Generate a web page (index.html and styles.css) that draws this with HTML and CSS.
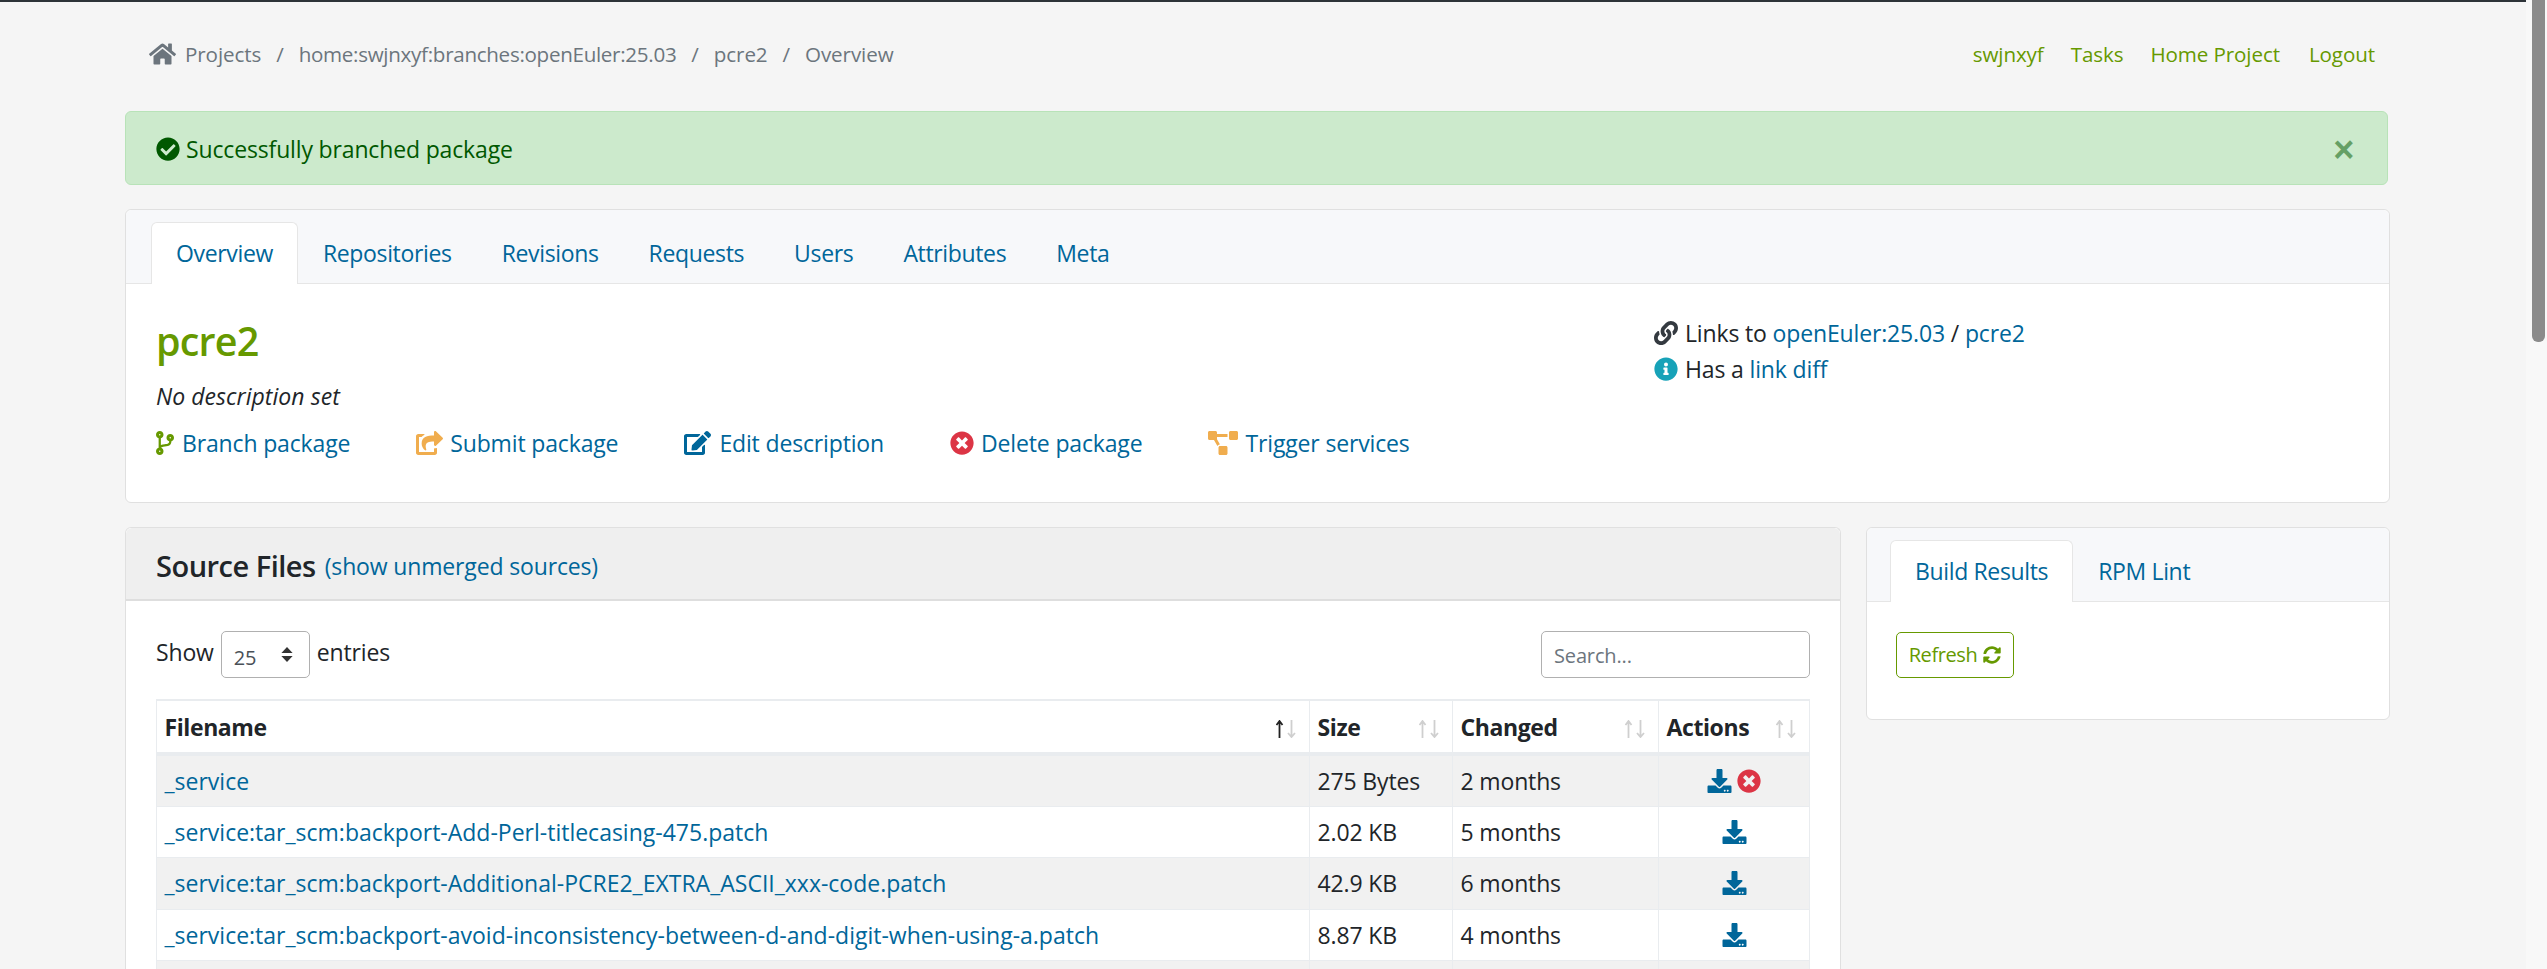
FILE: index.html
```html
<!DOCTYPE html>
<html lang="en">
<head>
<meta charset="utf-8">
<title>pcre2 - Overview</title>
<link rel="stylesheet" href="styles.css">
</head>
<body>
<svg class="defs" width="0" height="0" aria-hidden="true">
  <defs>
    <symbol id="i-home" viewBox="0 0 576 512"><path d="M280.37 148.26L96 300.11V464a16 16 0 0 0 16 16l112.06-.29a16 16 0 0 0 15.92-16V368a16 16 0 0 1 16-16h64a16 16 0 0 1 16 16v95.64a16 16 0 0 0 16 16.05L464 480a16 16 0 0 0 16-16V300L295.67 148.26a12.19 12.19 0 0 0-15.3 0zM571.6 251.47L488 182.56V44.05a12 12 0 0 0-12-12h-56a12 12 0 0 0-12 12v72.61L318.47 43a48 48 0 0 0-61 0L4.34 251.47a12 12 0 0 0-1.6 16.9l25.5 31A12 12 0 0 0 45.15 301l235.22-193.74a12.19 12.19 0 0 1 15.3 0L530.9 301a12 12 0 0 0 16.9-1.6l25.5-31a12 12 0 0 0-1.7-16.93z"/></symbol>
    <symbol id="i-check" viewBox="0 0 512 512"><path d="M504 256c0 136.967-111.033 248-248 248S8 392.967 8 256 119.033 8 256 8s248 111.033 248 248zM227.314 387.314l184-184c6.248-6.248 6.248-16.379 0-22.627l-22.627-22.627c-6.248-6.249-16.379-6.249-22.628 0L216 308.118l-70.059-70.059c-6.248-6.248-16.379-6.248-22.628 0l-22.627 22.627c-6.248 6.248-6.248 16.379 0 22.627l104 104c6.249 6.249 16.379 6.249 22.628.001z"/></symbol>
    <symbol id="i-times" viewBox="0 0 512 512"><path d="M256 8C119 8 8 119 8 256s111 248 248 248 248-111 248-248S393 8 256 8zm121.6 313.1c4.7 4.7 4.7 12.3 0 17L338 377.6c-4.7 4.7-12.3 4.7-17 0L256 312l-65.1 65.6c-4.7 4.7-12.3 4.7-17 0L134.4 338c-4.7-4.7-4.7-12.3 0-17l65.6-65-65.6-65.1c-4.7-4.7-4.7-12.3 0-17l39.6-39.6c4.7-4.7 12.3-4.7 17 0l65 65.7 65.1-65.6c4.7-4.7 12.3-4.7 17 0l39.6 39.6c4.7 4.7 4.7 12.3 0 17L312 256l65.6 65.1z"/></symbol>
    <symbol id="i-info" viewBox="0 0 512 512"><path d="M256 8C119.043 8 8 119.083 8 256c0 136.997 111.043 248 248 248s248-111.003 248-248C504 119.083 392.957 8 256 8zm0 110c23.196 0 42 18.804 42 42s-18.804 42-42 42-42-18.804-42-42 18.804-42 42-42zm56 254c0 6.627-5.373 12-12 12h-88c-6.627 0-12-5.373-12-12v-24c0-6.627 5.373-12 12-12h12v-64h-12c-6.627 0-12-5.373-12-12v-24c0-6.627 5.373-12 12-12h64c6.627 0 12 5.373 12 12v100h12c6.627 0 12 5.373 12 12v24z"/></symbol>
    <symbol id="i-link" viewBox="0 0 512 512"><path d="M326.612 185.391c59.747 59.809 58.927 155.698.36 214.59-.11.12-.24.25-.36.37l-67.2 67.2c-59.27 59.27-155.699 59.262-214.96 0-59.27-59.26-59.27-155.7 0-214.96l37.106-37.106c9.84-9.84 26.786-3.3 27.294 10.606.648 17.722 3.826 35.527 9.69 52.721 1.986 5.822.567 12.262-3.783 16.612l-13.087 13.087c-28.026 28.026-28.905 73.66-1.155 101.96 28.024 28.579 74.086 28.749 102.325.51l67.2-67.19c28.191-28.191 28.073-73.757 0-101.83-3.701-3.694-7.429-6.564-10.341-8.569a16.037 16.037 0 0 1-6.947-12.606c-.396-10.567 3.348-21.456 11.698-29.806l21.054-21.055c5.521-5.521 14.182-6.199 20.584-1.731a152.482 152.482 0 0 1 20.522 17.197zM467.547 44.449c-59.261-59.262-155.69-59.27-214.96 0l-67.2 67.2c-.12.12-.25.25-.36.37-58.566 58.892-59.387 154.781.36 214.59a152.454 152.454 0 0 0 20.521 17.196c6.402 4.468 15.064 3.789 20.584-1.731l21.054-21.055c8.35-8.35 12.094-19.239 11.698-29.806a16.037 16.037 0 0 0-6.947-12.606c-2.912-2.005-6.64-4.875-10.341-8.569-28.073-28.073-28.191-73.639 0-101.83l67.2-67.19c28.239-28.239 74.3-28.069 102.325.51 27.75 28.3 26.872 73.934-1.155 101.96l-13.087 13.087c-4.35 4.35-5.769 10.79-3.783 16.612 5.864 17.194 9.042 34.999 9.69 52.721.509 13.906 17.454 20.446 27.294 10.606l37.106-37.106c59.271-59.259 59.271-155.699.001-214.959z"/></symbol>
    <symbol id="i-branch" viewBox="0 0 384 512"><path d="M384 144c0-44.2-35.8-80-80-80s-80 35.8-80 80c0 36.4 24.3 67.1 57.5 76.8-.6 16.1-4.2 28.5-11 36.9-15.4 19.2-49.3 22.4-85.2 25.7-28.2 2.6-57.4 5.4-81.3 16.9v-144c32.5-10.2 56-40.5 56-76.3 0-44.2-35.8-80-80-80S0 35.8 0 80c0 35.8 23.5 66.1 56 76.3v199.3C23.5 365.9 0 396.2 0 432c0 44.2 35.8 80 80 80s80-35.8 80-80c0-34-21.2-63.1-51.2-74.6 3.1-5.2 7.8-9.8 14.9-13.4 16.2-8.2 40.4-10.4 66.1-12.8 42.2-3.9 90-8.4 118.2-43.4 14-17.4 21.1-39.8 21.6-67.9 31.6-10.8 54.4-40.7 54.4-75.9zM80 64c8.8 0 16 7.2 16 16s-7.2 16-16 16-16-7.2-16-16 7.2-16 16-16zm0 384c-8.8 0-16-7.2-16-16s7.2-16 16-16 16 7.2 16 16-7.2 16-16 16zm224-320c8.8 0 16 7.2 16 16s-7.2 16-16 16-16-7.2-16-16 7.2-16 16-16z"/></symbol>
    <symbol id="i-share" viewBox="0 0 576 512"><path d="M568.482 177.448L424.479 313.433C409.3 327.768 384 317.14 384 295.985v-71.963c-144.575.97-205.566 35.113-164.775 171.353 4.483 14.973-12.846 26.567-25.006 17.33C155.252 383.105 120 326.488 120 269.339c0-143.937 117.599-172.5 264-173.312V24.012c0-21.174 25.317-31.768 40.479-17.448l144.003 135.988c10.02 9.463 10.028 25.425 0 34.896zM384 379.128V448H64V128h50.916a11.99 11.99 0 0 0 8.648-3.693c14.953-15.568 32.237-27.89 51.014-37.676C186.708 80.7 183.749 64 170.84 64H48C21.49 64 0 85.49 0 112v352c0 26.51 21.49 48 48 48h352c26.51 0 48-21.49 48-48v-88.806c0-8.288-8.197-14.066-16.011-11.302a71.83 71.83 0 0 1-34.189 3.377c-7.27-1.046-13.8 4.514-13.8 11.859z"/></symbol>
    <symbol id="i-edit" viewBox="0 0 576 512"><path d="M402.6 83.2l90.2 90.2c3.8 3.8 3.8 10 0 13.8L274.4 405.6l-92.8 10.3c-12.4 1.4-22.9-9.1-21.5-21.5l10.3-92.8L388.8 83.2c3.8-3.8 10-3.8 13.8 0zm162-22.9l-48.8-48.8c-15.2-15.2-39.9-15.2-55.2 0l-35.4 35.4c-3.8 3.8-3.8 10 0 13.8l90.2 90.2c3.8 3.8 10 3.8 13.8 0l35.4-35.4c15.2-15.3 15.2-40 0-55.2zM384 346.2V448H64V128h229.8c3.2 0 6.2-1.3 8.5-3.5l40-40c7.6-7.6 2.2-20.5-8.5-20.5H48C21.5 64 0 85.5 0 112v352c0 26.5 21.5 48 48 48h352c26.5 0 48-21.5 48-48V306.2c0-10.7-12.9-16-20.5-8.5l-40 40c-2.2 2.3-3.5 5.3-3.5 8.5z"/></symbol>
    <symbol id="i-diagram" viewBox="0 0 640 512"><path d="M384 320H256c-17.67 0-32 14.33-32 32v128c0 17.67 14.33 32 32 32h128c17.67 0 32-14.33 32-32V352c0-17.67-14.33-32-32-32zM192 32c0-17.67-14.33-32-32-32H32C14.33 0 0 14.33 0 32v128c0 17.67 14.33 32 32 32h95.72l73.16 128.04C211.98 300.98 232.4 288 256 288h.28L192 175.51V128h224V64H192V32zM608 0H480c-17.67 0-32 14.33-32 32v128c0 17.67 14.33 32 32 32h128c17.67 0 32-14.33 32-32V32c0-17.67-14.33-32-32-32z"/></symbol>
    <symbol id="i-download" viewBox="0 0 512 512"><path d="M216 0h80c13.3 0 24 10.7 24 24v168h87.7c17.8 0 26.7 21.5 14.1 34.1L269.7 378.3c-7.5 7.5-19.8 7.5-27.3 0L90.1 226.1c-12.6-12.6-3.7-34.1 14.1-34.1H192V24c0-13.3 10.7-24 24-24zm296 376v112c0 13.3-10.7 24-24 24H24c-13.3 0-24-10.7-24-24V376c0-13.3 10.7-24 24-24h146.7l49 49c20.1 20.1 52.5 20.1 72.6 0l49-49H488c13.3 0 24 10.7 24 24zm-124 88c0-11-9-20-20-20s-20 9-20 20 9 20 20 20 20-9 20-20zm64 0c0-11-9-20-20-20s-20 9-20 20 9 20 20 20 20-9 20-20z"/></symbol>
    <symbol id="i-sync" viewBox="0 0 512 512"><path d="M370.72 133.28C339.458 104.008 298.888 87.962 255.848 88c-77.458.068-144.328 53.178-162.791 126.85-1.344 5.363-6.122 9.15-11.651 9.15H24.103c-7.498 0-13.194-6.807-11.807-14.176C33.933 94.924 134.813 8 256 8c66.448 0 126.791 26.136 171.315 68.685L463.03 40.97C478.149 25.851 504 36.559 504 57.941V192c0 13.255-10.745 24-24 24H345.941c-21.382 0-32.09-25.851-16.971-40.971l41.75-41.749zM32 296h134.059c21.382 0 32.09 25.851 16.971 40.971l-41.75 41.75c31.262 29.273 71.835 45.319 114.876 45.28 77.418-.07 144.315-53.144 162.787-126.849 1.344-5.363 6.122-9.15 11.651-9.15h57.304c7.498 0 13.194 6.807 11.807 14.176C478.067 417.076 377.187 504 256 504c-66.448 0-126.791-26.136-171.315-68.685L48.97 471.03C33.851 486.149 8 475.441 8 454.059V320c0-13.255 10.745-24 24-24z"/></symbol>
    <symbol id="i-sort" viewBox="0 0 20 18"><path class="sort-up" d="M3.5 18V1.5M.5 5l3-4 3 4" fill="none" stroke-width="1.8"/><path class="sort-down" d="M15.5 0v16.5M12 13l3.5 4 3.5-4" fill="none" stroke-width="1.8"/></symbol>
  </defs>
</svg>
<main class="page">
  <header class="topnav">
    <nav class="crumbs">
      <svg class="ic ic-home"><use href="#i-home"/></svg>
      <a href="#">Projects</a><span class="sep">/</span>
      <a class="crumb-long" href="#">home:swjnxyf:branches:openEuler:25.03</a><span class="sep">/</span>
      <a href="#">pcre2</a><span class="sep">/</span>
      <span>Overview</span>
    </nav>
    <nav class="usernav">
      <a href="#">swjnxyf</a><a href="#">Tasks</a><a href="#">Home Project</a><a href="#">Logout</a>
    </nav>
  </header>

  <div class="alert">
    <span class="alert-msg"><svg class="ic ic-alert"><use href="#i-check"/></svg>Successfully branched package</span>
    <span class="close">×</span>
  </div>

  <section class="card">
    <ul class="tabs">
      <li class="tab active"><a href="#">Overview</a></li>
      <li class="tab"><a href="#">Repositories</a></li>
      <li class="tab"><a href="#">Revisions</a></li>
      <li class="tab"><a href="#">Requests</a></li>
      <li class="tab"><a href="#">Users</a></li>
      <li class="tab"><a href="#">Attributes</a></li>
      <li class="tab"><a href="#">Meta</a></li>
    </ul>
    <div class="pkg">
      <div class="pkg-main">
        <h3 class="pkg-title">pcre2</h3>
        <p class="pkg-desc">No description set</p>
        <ul class="actions">
          <li class="act-branch"><svg class="ic ic-branch"><use href="#i-branch"/></svg><a href="#">Branch package</a></li>
          <li class="act-submit"><svg class="ic ic-share"><use href="#i-share"/></svg><a href="#">Submit package</a></li>
          <li class="act-edit"><svg class="ic ic-edit"><use href="#i-edit"/></svg><a href="#">Edit description</a></li>
          <li class="act-delete"><svg class="ic ic-del"><use href="#i-times"/></svg><a href="#">Delete package</a></li>
          <li class="act-trigger"><svg class="ic ic-diagram"><use href="#i-diagram"/></svg><a href="#">Trigger services</a></li>
        </ul>
      </div>
      <div class="pkg-side">
        <div class="side-line"><svg class="ic ic-link"><use href="#i-link"/></svg>Links to <a href="#">openEuler:25.03</a> / <a href="#">pcre2</a></div>
        <div class="side-line"><svg class="ic ic-info"><use href="#i-info"/></svg>Has a <a href="#">link diff</a></div>
      </div>
    </div>
  </section>

  <div class="columns">
    <section class="card sources">
      <div class="sources-head">
        <h5 class="sources-title">Source Files</h5>
        <a href="#">(show unmerged sources)</a>
      </div>
      <div class="sources-body">
        <div class="dt-controls">
          <label class="dt-length">Show <span class="select"><span>25</span><svg class="carets" viewBox="0 0 14 16"><path d="M7 0l6 6.5H1zM7 16L1 9.5h12z"/></svg></span> entries</label>
          <span class="search">Search...</span>
        </div>
        <table class="files">
          <colgroup>
            <col class="c-name"><col class="c-size"><col class="c-changed"><col class="c-actions">
          </colgroup>
          <thead>
            <tr>
              <th><span class="th-in">Filename<svg class="sort sort-asc"><use href="#i-sort"/></svg></span></th>
              <th><span class="th-in">Size<svg class="sort"><use href="#i-sort"/></svg></span></th>
              <th><span class="th-in">Changed<svg class="sort"><use href="#i-sort"/></svg></span></th>
              <th><span class="th-in">Actions<svg class="sort"><use href="#i-sort"/></svg></span></th>
            </tr>
          </thead>
          <tbody>
            <tr>
              <td><a href="#">_service</a></td><td>275 Bytes</td><td>2 months</td>
              <td class="act-cell"><svg class="ic ic-dl"><use href="#i-download"/></svg><svg class="ic ic-rm"><use href="#i-times"/></svg></td>
            </tr>
            <tr>
              <td><a href="#">_service:tar_scm:backport-Add-Perl-titlecasing-475.patch</a></td><td>2.02 KB</td><td>5 months</td>
              <td class="act-cell"><svg class="ic ic-dl"><use href="#i-download"/></svg></td>
            </tr>
            <tr>
              <td><a href="#">_service:tar_scm:backport-Additional-PCRE2_EXTRA_ASCII_xxx-code.patch</a></td><td>42.9 KB</td><td>6 months</td>
              <td class="act-cell"><svg class="ic ic-dl"><use href="#i-download"/></svg></td>
            </tr>
            <tr>
              <td><a href="#">_service:tar_scm:backport-avoid-inconsistency-between-d-and-digit-when-using-a.patch</a></td><td>8.87 KB</td><td>4 months</td>
              <td class="act-cell"><svg class="ic ic-dl"><use href="#i-download"/></svg></td>
            </tr>
            <tr><td>&nbsp;</td><td></td><td></td><td></td></tr>
          </tbody>
        </table>
      </div>
    </section>

    <aside class="card results">
      <ul class="tabs tabs-side">
        <li class="tab active"><a href="#">Build Results</a></li>
        <li class="tab"><a href="#">RPM Lint</a></li>
      </ul>
      <div class="results-body">
        <button class="refresh" type="button">Refresh <svg class="ic ic-sync"><use href="#i-sync"/></svg></button>
      </div>
    </aside>
  </div>
</main>
<div class="scrollbar"><div class="thumb"></div></div>
</body>
</html>
```

FILE: styles.css
```css
* { box-sizing: border-box; }
html, body { height: 100%; }
body {
  margin: 0;
  display: flex;
  height: 100vh;
  overflow: hidden;
  background: #f5f5f5;
  color: #212529;
  font-family: "Open Sans", "Noto Sans", sans-serif;
  font-size: 23px;
  letter-spacing: -0.15px;
  line-height: 36px;
}
a { color: #00669a; text-decoration: none; }
ul { list-style: none; margin: 0; padding: 0; }
.defs { position: absolute; }
.ic { display: inline-block; fill: currentColor; flex: none; }

.page {
  flex: 1;
  min-width: 0;
  border-top: 2px solid #2d3338;
  padding: 0 136px 0 125px;
}
.scrollbar { width: 21px; background: #f8f8f8; padding: 0 2px 0 6px; }
.thumb { height: 342px; background: #8b8b8b; border-radius: 0 0 6px 6px; }

.topnav {
  height: 109px;
  display: flex;
  justify-content: space-between;
  align-items: center;
  padding: 0 15px 5px 24px;
  font-size: 20.6px;
  letter-spacing: -0.1px;
}
.crumbs { display: flex; align-items: center; color: #6c757d; }
.crumbs a { color: #6c757d; }
.crumbs .crumb-long { letter-spacing: -0.3px; }
.ic-home { width: 27px; height: 24px; margin-right: 9px; color: #6c757d; }
.sep { padding: 0 15px; }
.usernav { display: flex; gap: 27px; }
.usernav a { color: #669900; }
.usernav a:last-child { margin-left: 2px; }

.alert {
  height: 74px;
  display: flex;
  justify-content: space-between;
  align-items: center;
  margin-right: 2px;
  padding: 0 33px 0 30px;
  background: #cceacc;
  border: 1px solid #b8e3b8;
  border-radius: 6px;
  color: #005800;
  margin-bottom: 24px;
}
.alert-msg { display: flex; align-items: center; padding-top: 2px; }
.ic-alert { width: 24px; height: 24px; margin-right: 6px; }
.close { font: 700 36px/1 "Liberation Sans", sans-serif; color: #005800; opacity: .5; margin-top: 4px; }

.card {
  background: #fff;
  border: 1px solid #e0e0e0;
  border-radius: 6px;
}
.tabs {
  display: flex;
  height: 74px;
  padding: 12px 0 0 25px;
  background: #f7f8fa;
  border-bottom: 1px solid #e6e6e6;
  border-radius: 6px 6px 0 0;
  letter-spacing: -0.35px;
}
.tab {
  height: 62px;
  padding: 0 24px;
  line-height: 60px;
  border: 1px solid transparent;
  border-bottom: 0;
}
.tab.active {
  background: #fff;
  border-color: #e6e6e6;
  border-radius: 6px 6px 0 0;
}

.pkg { display: flex; justify-content: space-between; height: 218px; padding: 0 0 0 30px; }
.pkg-title {
  margin: 30px 0 0;
  font-size: 39.5px;
  line-height: 54px;
  font-weight: 600;
  color: #669900;
  letter-spacing: -0.8px;
}
.pkg-desc { margin: 10px 0 0; font-style: italic; line-height: 36px; letter-spacing: 0.05px; }
.actions { display: flex; margin-top: 11px; }
.actions li { display: flex; align-items: center; margin-right: 66px; }
.ic-branch { width: 18px; height: 24px; color: #669900; margin-right: 8px; }
.ic-share { width: 27px; height: 24px; color: #f0ad4e; margin-right: 7px; }
.ic-edit { width: 27px; height: 24px; color: #00669a; margin-right: 8px; }
.ic-del { width: 24px; height: 24px; color: #dc3545; margin-right: 7px; }
.ic-diagram { width: 30px; height: 24px; color: #f0ad4e; margin-right: 7px; }

.pkg-side { width: 735px; padding-top: 31px; }
.side-line { display: flex; align-items: center; white-space: pre; }
.ic-link { width: 24px; height: 24px; color: #343a40; margin-right: 7px; }
.ic-info { width: 24px; height: 24px; color: #17a2b8; margin-right: 7px; }

.columns { display: flex; gap: 25px; margin-top: 24px; align-items: flex-start; }
.sources { width: 1716px; flex: none; border-bottom: 0; }
.results { width: 524px; flex: none; }

.sources-head {
  height: 73px;
  display: flex;
  align-items: center;
  gap: 9px;
  padding: 4px 30px 0;
  background: #efefef;
  border-bottom: 2px solid #dedede;
  border-radius: 6px 6px 0 0;
}
.sources-title { margin: 0; font-size: 29px; font-weight: 600; letter-spacing: -0.5px; }
.sources-body { padding: 30px 30px 0; }

.dt-controls { display: flex; justify-content: space-between; height: 68px; }
.dt-length { display: flex; gap: 7px; align-items: flex-start; line-height: 42px; }
.select {
  width: 89px;
  height: 47px;
  display: flex;
  justify-content: space-between;
  align-items: center;
  padding: 6px 15px 0 12px;
  border: 1px solid #b0b0b0;
  border-radius: 5px;
  color: #495057;
  font-size: 20px;
}
.carets { width: 14px; height: 15px; fill: #333; margin-top: -6px; }
.search {
  width: 269px;
  height: 47px;
  padding: 0 12px;
  border: 1px solid #b0b0b0;
  border-radius: 5px;
  color: #6c757d;
  font-size: 20px;
  line-height: 47px;
}

.files { width: 1653px; table-layout: fixed; border-collapse: collapse; }
.c-name { width: 1153px; }
.c-size { width: 143px; }
.c-changed { width: 206px; }
.c-actions { width: 151px; }
.files th, .files td {
  border: 1px solid #e9ecef;
  padding: 7px 7.5px;
  height: 51.3px;
  text-align: left;
  white-space: nowrap;
}
.files td a { letter-spacing: 0; }
.files th { border-top-width: 2px; border-bottom-width: 4px; font-weight: 700; height: 54px; letter-spacing: -0.4px; }
.th-in { display: flex; justify-content: space-between; align-items: center; }
.sort { width: 20px; height: 18px; margin: 4px 6px 0 0; --up: #cfcfcf; }
.sort-asc { --up: #222; }
.sort-up { stroke: var(--up); }
.sort-down { stroke: #cfcfcf; }
.files tbody tr:nth-child(odd) { background: #f1f1f1; }
.act-cell.act-cell { text-align: center; padding-top: 0; padding-bottom: 0; line-height: 0; }
.act-cell .ic { vertical-align: middle; }
.ic-dl { width: 25px; height: 24px; color: #00669a; }
.ic-rm { width: 24px; height: 24px; color: #dc3545; margin-left: 5px; }

.tabs-side { padding-left: 23px; }
.results-body { height: 117px; padding: 30px 29px; }
.refresh {
  height: 46px;
  width: 118px;
  display: flex;
  align-items: center;
  justify-content: center;
  gap: 6px;
  padding: 0;
  background: #fff;
  border: 1px solid #669900;
  border-radius: 5px;
  color: #669900;
  font: inherit;
  font-size: 20px;
  letter-spacing: -0.4px;
}
.ic-sync { width: 18px; height: 18px; }
```
